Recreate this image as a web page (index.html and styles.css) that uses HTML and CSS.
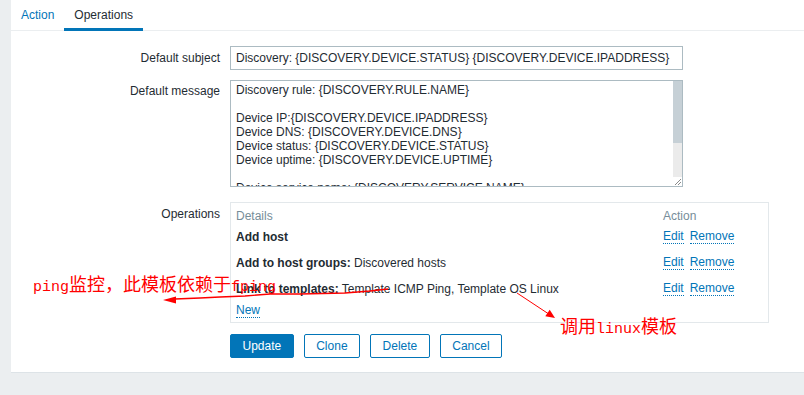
FILE: index.html
```html
<!DOCTYPE html>
<html lang="en">
<head>
<meta charset="utf-8">
<title>Discovery action - Operations</title>
<link rel="stylesheet" href="styles.css">
</head>
<body>
<div class="page">
  <div class="panel">
    <div class="tabs">
      <div class="tab">Action</div>
      <div class="tab active">Operations</div>
    </div>
    <div class="form">
      <div class="row">
        <div class="label l-subject">Default subject</div>
        <div class="input">Discovery: {DISCOVERY.DEVICE.STATUS} {DISCOVERY.DEVICE.IPADDRESS}</div>
      </div>
      <div class="row r-message">
        <div class="label l-message">Default message</div>
        <div class="textarea">
          <div class="ta-text">Discovery rule: {DISCOVERY.RULE.NAME}

Device IP:{DISCOVERY.DEVICE.IPADDRESS}
Device DNS: {DISCOVERY.DEVICE.DNS}
Device status: {DISCOVERY.DEVICE.STATUS}
Device uptime: {DISCOVERY.DEVICE.UPTIME}

Device service name: {DISCOVERY.SERVICE.NAME}</div>
          <div class="ta-scroll">
            <div class="thumb"></div>
            <div class="track"></div>
            <div class="corner">
              <svg width="9" height="9" viewBox="0 0 9 9"><path d="M2 8 L8 2 M5 8 L8 5" stroke="#8a8a8a" stroke-width="1" fill="none"/></svg>
            </div>
          </div>
        </div>
      </div>
      <div class="row r-ops">
        <div class="label l-ops">Operations</div>
        <div class="ops">
          <div class="op-head">
            <div class="c-details">Details</div>
            <div class="c-action">Action</div>
          </div>
          <div class="op-row">
            <div class="c-details"><b>Add host</b></div>
            <div class="c-action"><span class="link">Edit</span><span class="link">Remove</span></div>
          </div>
          <div class="op-row">
            <div class="c-details"><b>Add to host groups:</b> Discovered hosts</div>
            <div class="c-action"><span class="link">Edit</span><span class="link">Remove</span></div>
          </div>
          <div class="op-row">
            <div class="c-details"><b>Link to templates:</b> Template ICMP Ping, Template OS Linux</div>
            <div class="c-action"><span class="link">Edit</span><span class="link">Remove</span></div>
          </div>
          <div class="op-new"><span class="link">New</span></div>
        </div>
      </div>
      <div class="row r-buttons">
        <div class="label"></div>
        <div class="buttons">
          <button class="btn primary">Update</button>
          <button class="btn">Clone</button>
          <button class="btn">Delete</button>
          <button class="btn">Cancel</button>
        </div>
      </div>
    </div>
  </div>
</div>

<div class="note note-1"><span class="lat">ping</span>监控，此模板依赖于<span class="lat">fping</span></div>
<div class="note note-2">调用<span class="lat">linux</span>模板</div>
<svg class="arrows" width="804" height="395" viewBox="0 0 804 395">
  <path d="M175 299 L200 298 L220 297 L245 296 L270 294 L300 294 L345 293 L370 291 L388 289" stroke="#f00" stroke-width="1.4" fill="none"/>
  <polygon points="163,300 176,296.5 176,303.5" fill="#f00"/>
  <path d="M517 293 L548 313.5" stroke="#f00" stroke-width="1" fill="none"/>
  <polygon points="555,318 545.3,316.3 549.7,309.7" fill="#f00"/>
</svg>
</body>
</html>
```
FILE: styles.css
```css
html, body {
  margin: 0;
  padding: 0;
}
body {
  background: #ebeef0;
  font-family: "Liberation Sans", Arial, sans-serif;
  font-size: 12px;
  color: #1f2c33;
  width: 804px;
  height: 395px;
  overflow: hidden;
  position: relative;
}
.page {
  padding-left: 11px;
}
.panel {
  background: #fff;
  border-bottom: 1px solid #dde3e7;
  padding-bottom: 14px;
}
.tabs {
  display: flex;
  height: 30px;
  border-bottom: 1px solid #ebeef0;
}
.tab {
  padding: 0 10px;
  line-height: 30px;
  height: 30px;
  color: #0275b8;
}
.tab.active {
  color: #1f2c33;
  height: 31px;
  margin-bottom: -1px;
  box-shadow: inset 0 -3px 0 #0275b8;
}
.form {
  padding-top: 15px;
}
.row {
  display: grid;
  grid-template-columns: 209px 1fr;
  column-gap: 10px;
}
.label {
  text-align: right;
}
.l-subject {
  line-height: 24px;
}
.input {
  width: 453px;
  height: 24px;
  box-sizing: border-box;
  border: 1px solid #acbbc2;
  padding: 0 5px;
  line-height: 22px;
  white-space: nowrap;
  overflow: hidden;
}
.r-message {
  margin-top: 10px;
}
.l-message {
  padding-top: 4px;
  line-height: 14px;
}
.textarea {
  width: 453px;
  height: 107px;
  box-sizing: border-box;
  border: 1px solid #acbbc2;
  display: flex;
}
.ta-text {
  flex: 1;
  padding: 2px 5px 0;
  line-height: 14px;
  white-space: pre;
  overflow: hidden;
}
.ta-scroll {
  width: 9px;
  display: flex;
  flex-direction: column;
}
.thumb {
  height: 62px;
  background: #c6d0d6;
}
.track {
  flex: 1;
  background: #ebebeb;
}
.corner {
  height: 9px;
  background: #fff;
}
.corner svg {
  display: block;
}
.r-ops {
  margin-top: 15px;
}
.l-ops {
  padding-top: 5px;
  line-height: 14px;
}
.ops {
  width: 539px;
  box-sizing: border-box;
  border: 1px solid #e3e8eb;
  padding: 0 0 4px 5px;
}
.op-head {
  display: flex;
  color: #768d99;
  line-height: 14px;
  padding: 6px 0 1px;
}
.op-row {
  display: flex;
  line-height: 26px;
  height: 26px;
}
.c-details {
  width: 427px;
  white-space: nowrap;
}
.c-action {
  display: flex;
  gap: 6px;
}
.op-row .c-action {
  align-items: center;
}
.link {
  color: #0275b8;
  line-height: 14px;
  border-bottom: 1px dotted #0275b8;
}
.op-row .link {
  display: inline-block;
  line-height: 13px;
}
.op-new {
  line-height: 16px;
  height: 16px;
}
.r-buttons {
  margin-top: 11px;
}
.buttons {
  display: flex;
  gap: 10px;
}
.btn {
  height: 24px;
  padding: 0 11.5px;
  border: 1px solid #0275b8;
  border-radius: 2px;
  background: #fff;
  color: #0275b8;
  font-family: "Liberation Sans", Arial, sans-serif;
  font-size: 12px;
  line-height: 22px;
  margin: 0;
}
.btn.primary {
  background: #0275b8;
  color: #fff;
}
.note {
  position: absolute;
  color: #f00;
  font-family: "Noto Sans CJK SC", sans-serif;
  font-size: 18px;
  line-height: 18px;
  white-space: nowrap;
}
.note .lat {
  font-family: "Liberation Mono", "Noto Sans CJK SC", monospace;
  font-size: 15px;
}
.note-1 {
  left: 33px;
  top: 274px;
}
.note-2 {
  left: 560px;
  top: 316px;
}
.arrows {
  position: absolute;
  left: 0;
  top: 0;
  pointer-events: none;
}
```
